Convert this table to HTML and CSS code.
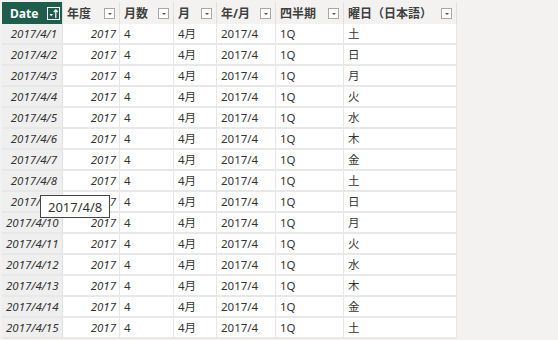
FILE: index.html
```html
<!DOCTYPE html>
<html lang="ja">
<head>
<meta charset="utf-8">
<link rel="stylesheet" href="styles.css">
</head>
<body>
<div class="page">
  <div class="table">
    <div class="row head">
      <div class="hc date-h"><span>Date</span><span class="sortbtn"><svg width="13" height="13" viewBox="0 0 13 13"><rect x="0.5" y="0.5" width="12" height="12" fill="#1e5c4c" stroke="#fff"/><path d="M2.5 7 L6 7 L4.25 9.2 Z" fill="#fff"/><path d="M8.8 11 V3 M6.8 5 L8.8 2.8 L10.8 5" stroke="#fff" stroke-width="1.2" fill="none"/></svg></span></div>
      <div class="hc"><span>年度</span><span class="dd"></span></div>
      <div class="hc"><span>月数</span><span class="dd"></span></div>
      <div class="hc"><span>月</span><span class="dd"></span></div>
      <div class="hc"><span>年/月</span><span class="dd"></span></div>
      <div class="hc"><span>四半期</span><span class="dd"></span></div>
      <div class="hc"><span>曜日（日本語）</span><span class="dd"></span></div>
    </div>
    <div class="row"><div class="c d">2017/4/1</div><div class="c y">2017</div><div class="c">4</div><div class="c">4月</div><div class="c">2017/4</div><div class="c">1Q</div><div class="c">土</div></div>
    <div class="row"><div class="c d">2017/4/2</div><div class="c y">2017</div><div class="c">4</div><div class="c">4月</div><div class="c">2017/4</div><div class="c">1Q</div><div class="c">日</div></div>
    <div class="row"><div class="c d">2017/4/3</div><div class="c y">2017</div><div class="c">4</div><div class="c">4月</div><div class="c">2017/4</div><div class="c">1Q</div><div class="c">月</div></div>
    <div class="row"><div class="c d">2017/4/4</div><div class="c y">2017</div><div class="c">4</div><div class="c">4月</div><div class="c">2017/4</div><div class="c">1Q</div><div class="c">火</div></div>
    <div class="row"><div class="c d">2017/4/5</div><div class="c y">2017</div><div class="c">4</div><div class="c">4月</div><div class="c">2017/4</div><div class="c">1Q</div><div class="c">水</div></div>
    <div class="row"><div class="c d">2017/4/6</div><div class="c y">2017</div><div class="c">4</div><div class="c">4月</div><div class="c">2017/4</div><div class="c">1Q</div><div class="c">木</div></div>
    <div class="row"><div class="c d">2017/4/7</div><div class="c y">2017</div><div class="c">4</div><div class="c">4月</div><div class="c">2017/4</div><div class="c">1Q</div><div class="c">金</div></div>
    <div class="row"><div class="c d">2017/4/8</div><div class="c y">2017</div><div class="c">4</div><div class="c">4月</div><div class="c">2017/4</div><div class="c">1Q</div><div class="c">土</div></div>
    <div class="row"><div class="c d">2017/4/9</div><div class="c y">2017</div><div class="c">4</div><div class="c">4月</div><div class="c">2017/4</div><div class="c">1Q</div><div class="c">日</div></div>
    <div class="row"><div class="c d">2017/4/10</div><div class="c y">2017</div><div class="c">4</div><div class="c">4月</div><div class="c">2017/4</div><div class="c">1Q</div><div class="c">月</div></div>
    <div class="row"><div class="c d">2017/4/11</div><div class="c y">2017</div><div class="c">4</div><div class="c">4月</div><div class="c">2017/4</div><div class="c">1Q</div><div class="c">火</div></div>
    <div class="row"><div class="c d">2017/4/12</div><div class="c y">2017</div><div class="c">4</div><div class="c">4月</div><div class="c">2017/4</div><div class="c">1Q</div><div class="c">水</div></div>
    <div class="row"><div class="c d">2017/4/13</div><div class="c y">2017</div><div class="c">4</div><div class="c">4月</div><div class="c">2017/4</div><div class="c">1Q</div><div class="c">木</div></div>
    <div class="row"><div class="c d">2017/4/14</div><div class="c y">2017</div><div class="c">4</div><div class="c">4月</div><div class="c">2017/4</div><div class="c">1Q</div><div class="c">金</div></div>
    <div class="row"><div class="c d">2017/4/15</div><div class="c y">2017</div><div class="c">4</div><div class="c">4月</div><div class="c">2017/4</div><div class="c">1Q</div><div class="c">土</div></div>
    <div class="tooltip">2017/4/8</div>
  </div>
</div>
</body>
</html>
```
FILE: styles.css
```css
html, body {
  margin: 0;
  padding: 0;
  background: #f3f2f1;
  width: 558px;
  height: 340px;
  overflow: hidden;
}
.page {
  padding: 2px 0 0 2px;
  font-family: "Noto Sans", "Noto Sans CJK JP", sans-serif;
  font-size: 11.5px;
  color: #333;
}
.table {
  position: relative;
  width: 455px;
}
.row {
  display: grid;
  grid-template-columns: 61px 57px 54px 43px 59px 68px 113px;
  height: 21px;
}
.row.head {
  height: 22px;
}
.hc {
  display: flex;
  align-items: center;
  justify-content: space-between;
  padding: 0 4px 0 4px;
  background: #f3f2f1;
  border-right: 1px solid #e2e0de;
  font-weight: 700;
  color: #3f3f3f;
  font-size: 12px;
}
.hc.date-h {
  background: #1e5c4c;
  color: #fff;
  padding: 0 2px 0 8px;
}
.sortbtn {
  display: flex;
}
.dd {
  width: 11px;
  height: 11px;
  border: 1px solid #a8a8a8;
  background: #fff;
  box-sizing: border-box;
  position: relative;
  flex: none;
}
.dd::after {
  content: "";
  position: absolute;
  left: 3px;
  top: 4px;
  border-left: 2px solid transparent;
  border-right: 2px solid transparent;
  border-top: 2px solid #555;
}
.c {
  background: #fff;
  border-right: 1px solid #e6e6e6;
  border-bottom: 2px solid #e8e8e8;
  padding: 0 4px;
  line-height: 19px;
  white-space: nowrap;
  overflow: hidden;
  color: #333;
}
.c.d {
  background: #efefef;
  font-style: italic;
  text-align: right;
  padding-right: 5px;
  border-right: 1px solid #e2e2e2;
}
.c.y {
  font-style: italic;
  text-align: right;
  padding-right: 3px;
}
.tooltip {
  position: absolute;
  left: 38px;
  top: 193px;
  background: #fff;
  border: 1px solid #444;
  padding: 0 7px;
  height: 23px;
  line-height: 22px;
  font-size: 13px;
  color: #333;
  box-sizing: border-box;
}
```
